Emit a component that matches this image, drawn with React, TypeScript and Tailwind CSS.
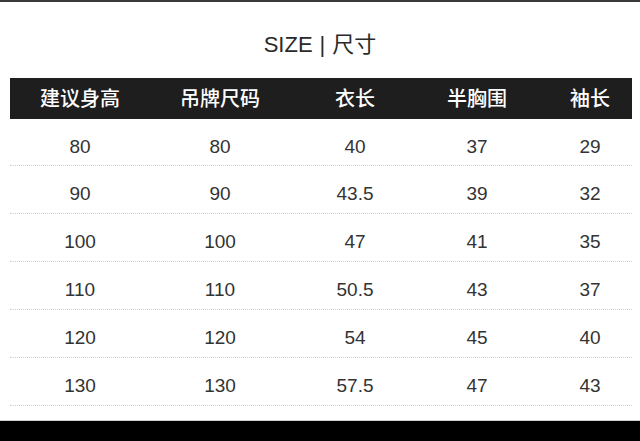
const headers = ['建议身高', '吊牌尺码', '衣长', '半胸围', '袖长'];

const rows = [
  ['80', '80', '40', '37', '29'],
  ['90', '90', '43.5', '39', '32'],
  ['100', '100', '47', '41', '35'],
  ['110', '110', '50.5', '43', '37'],
  ['120', '120', '54', '45', '40'],
  ['130', '130', '57.5', '47', '43'],
];

const cols = 'grid grid-cols-[140px_140px_130px_114px_1fr]';

export default function App() {
  return (
    <div className="w-[640px] h-[441px] bg-white flex flex-col overflow-hidden font-['Liberation_Sans','Noto_Sans_CJK_SC',sans-serif]">
      <div className="h-[2px] bg-[#3a3a3a]" />
      {/* Title */}
      <div className="h-[76px] flex items-center justify-center pt-[8px] text-[22px] text-[#2a2a2a]">
        <span>SIZE</span>
        <span className="mx-[7px]">|</span>
        <span>尺寸</span>
      </div>

      <div className="mx-[10px] w-[622px]">
        <div className={`${cols} h-[41px] items-center bg-[#1e1e1e] text-white text-[20px] font-medium`}>
          {headers.map((h, i) => (
            <div key={h} className={`text-center ${i === 4 ? 'pl-[14px]' : ''}`}>
              {h}
            </div>
          ))}
        </div>

        {rows.map((row, r) => (
          <div
            key={r}
            className={`${cols} ${r === 0 ? 'h-[47px]' : 'h-[48px]'} items-center pt-[10px] border-b border-dotted border-[#cfcfcf] text-[19px] text-[#333]`}
          >
            {row.map((v, i) => (
              <div key={i} className={`text-center ${i === 4 ? 'pl-[14px]' : ''}`}>
                {v}
              </div>
            ))}
          </div>
        ))}
      </div>

      <div className="flex-1" />
      <div className="h-[1px] bg-[#d0d0d0]" />
      <div className="h-[20px] bg-black" />
    </div>
  );
}
